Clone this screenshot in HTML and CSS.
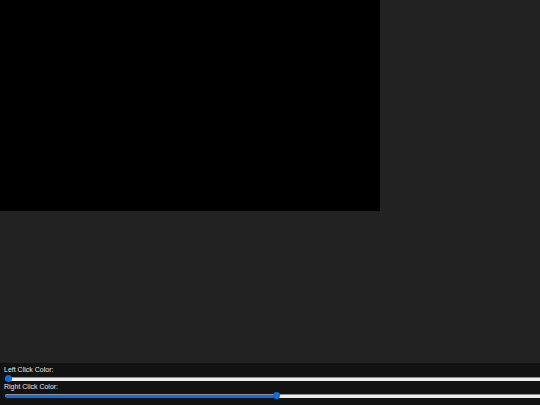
FILE: index.html
```html
<!DOCTYPE html>
<html lang="en">
<head>
<meta charset="utf-8">
<title>Click Colors</title>
<link rel="stylesheet" href="styles.css">
</head>
<body>
<div class="app">
  <canvas class="board" width="380" height="211"></canvas>
  <div class="spacer"></div>
  <div class="controls">
    <label class="label" for="left">Left Click Color:</label>
    <input class="slider" id="left" type="range" min="0" max="100" value="0" style="--v: 0">
    <label class="label" for="right">Right Click Color:</label>
    <input class="slider" id="right" type="range" min="0" max="100" value="50" style="--v: 0.5">
  </div>
</div>
</body>
</html>
```

FILE: styles.css
```css
html, body {
  margin: 0;
  padding: 0;
  height: 100%;
  overflow: hidden;
  background: #222222;
  font-family: "Liberation Sans", Arial, sans-serif;
}

.app {
  display: flex;
  flex-direction: column;
  height: 100vh;
}

.board {
  display: block;
  width: 380px;
  height: 211px;
  background: #000000;
  flex: none;
}

.spacer {
  flex: 1;
}

.controls {
  box-sizing: border-box;
  height: 42px;
  background: #121212;
  padding: 3px 4px 0;
  flex: none;
}

.label {
  display: block;
  height: 8px;
  font-size: 7px;
  line-height: 8px;
  color: #e6e6e6;
  white-space: nowrap;
}

.slider {
  -webkit-appearance: none;
  appearance: none;
  display: block;
  box-sizing: border-box;
  width: calc(100% + 10px);
  height: 7px;
  margin: 1px 0 1px 1px;
  padding: 0;
  border: 0;
  background: transparent;
  outline: none;
}

.slider::-webkit-slider-runnable-track {
  height: 4px;
  border-radius: 2px;
  background: linear-gradient(to right, #0a6fe6 calc(3px + (100% - 7px) * var(--v)), #ececec 0);
  box-shadow: inset 0 1px 0 #8f8f8f;
}

.slider::-webkit-slider-thumb {
  -webkit-appearance: none;
  appearance: none;
  width: 7px;
  height: 7px;
  margin-top: -1.5px;
  border-radius: 50%;
  background: #0a6fe6;
  border: none;
}
```
